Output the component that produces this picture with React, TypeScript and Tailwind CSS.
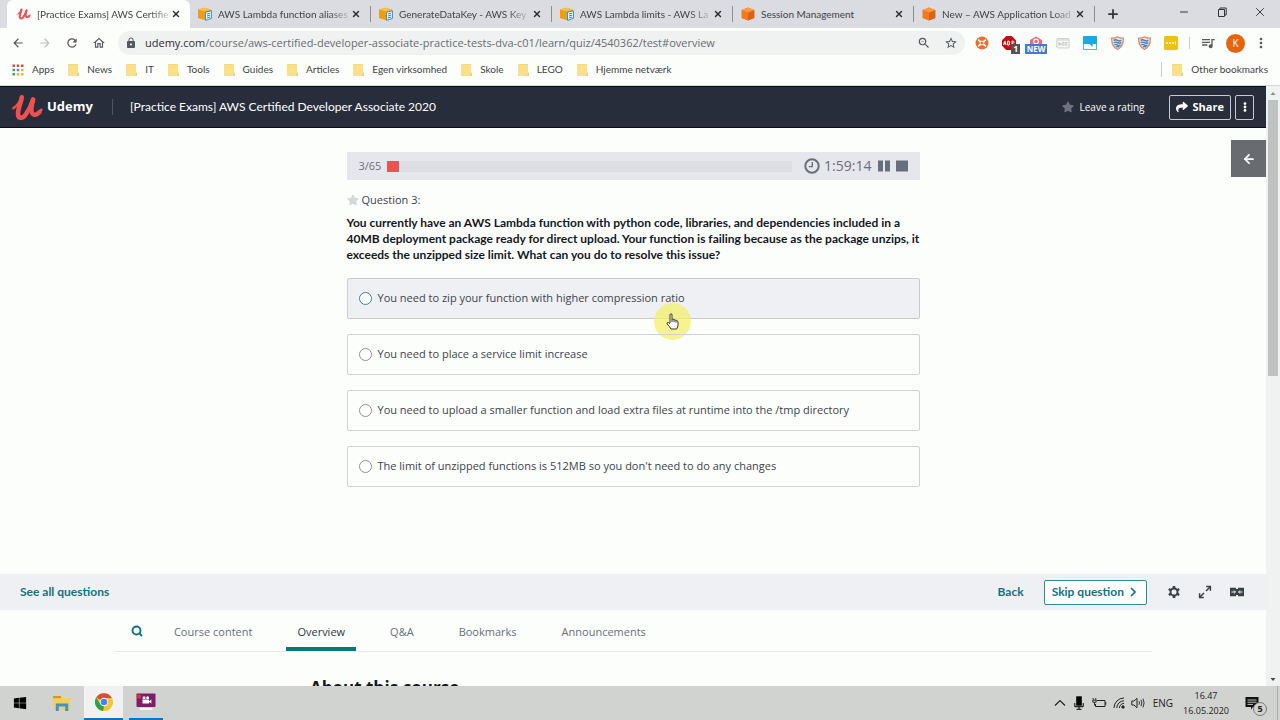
import React from "react";
import { ArrowLeft, Minus, Plus, X, Search } from "lucide-react";
import {
  MdArrowBack,
  MdArrowForward,
  MdRefresh,
  MdOutlineHome,
  MdLock,
  MdStarBorder,
  MdQueueMusic,
  MdMoreVert,
  MdOutlineZoomOut,
} from "react-icons/md";
import { FaStar, FaShare, FaEllipsisV, FaWindows } from "react-icons/fa";

const UdemyMark = ({ className }: { className: string }) => (
  <svg viewBox="0 0 31 27" className={className} fill="none" stroke="#ec5252" strokeLinecap="round" strokeLinejoin="round" aria-hidden="true">
    <path d="M1.4 14.2C4.6 12 7.6 8.4 9 4" strokeWidth="2.4" />
    <path d="M9.8 3.4C9 9 5.6 15 6 20.2C6.4 25 10.8 24.8 13.4 21C16.6 16.6 19.4 11 21 5.6" strokeWidth="4.6" />
    <path d="M21.2 5.6C19.8 11 18.2 16.5 20.4 19.5C22.2 22 25.2 20.6 27.6 18" strokeWidth="4.4" />
    <path d="M26 19L29.4 15.8" strokeWidth="2.6" />
  </svg>
);

const AwsDoc = () => (
  <svg viewBox="0 0 14 14" className="size-3.5 shrink-0" aria-hidden="true">
    <path d="M0 2.6L6.6 0.8L13 2.6V11L6.6 13L0 11Z" fill="#f3a51d" />
    <path d="M0 2.6L6.6 4.2V13L0 11Z" fill="#eb9f16" />
    <path d="M0 2.6L6.6 0.8L13 2.6L6.6 4.2Z" fill="#f9bf4c" />
    <path d="M7.6 5.2L13.4 3.8V11.4L7.6 13.4Z" fill="#fff" stroke="#2d7db5" strokeWidth="0.9" />
    <path d="M9 7L12.2 6.2M9 9L12.2 8.1M9 11L12.2 10" stroke="#2d7db5" strokeWidth="1" />
  </svg>
);

const AwsCube = () => (
  <svg viewBox="0 0 14 14" className="size-3.5 shrink-0" aria-hidden="true">
    <path d="M7 0.5L13.3 3V11L7 13.5L0.7 11V3Z" fill="#f58220" />
    <path d="M0.7 3L7 5.4V13.5L0.7 11Z" fill="#f27a1a" />
    <path d="M13.3 3L7 5.4V13.5L13.3 11Z" fill="#e0601a" />
    <path d="M7 0.5L13.3 3L7 5.4L0.7 3Z" fill="#fa9a3c" />
  </svg>
);

const Folder = () => (
  <svg viewBox="0 0 11 12" className="h-3 w-[11px] shrink-0" aria-hidden="true">
    <path d="M0.5 0H10V8.5L11 9V12H0.5Z" fill="#fbe08a" />
    <path d="M10 8.5L11 9V12H9Z" fill="#f0cd68" />
    <path d="M0.7 12V0.4H10" stroke="#f2d474" strokeWidth="0.7" fill="none" />
  </svg>
);

const Shield = () => (
  <svg viewBox="0 0 13 14" className="h-3.5 w-[13px]" aria-hidden="true">
    <path d="M6.5 0.7C8.3 1.8 10.3 2.2 12.3 2.1C12.6 7.5 10.8 11.3 6.5 13.5C2.2 11.3 0.4 7.5 0.7 2.1C2.7 2.2 4.7 1.8 6.5 0.7Z" fill="#dfe6ee" stroke="#e0875a" strokeWidth="1.2" />
    <path d="M2.6 4.4Q4.6 3.2 6.5 4.4T10.4 4.4M2.6 6.7Q4.6 5.5 6.5 6.7T10.4 6.7M3.4 9Q5 7.8 6.5 9T9.6 9M4.8 11Q6.5 10 8.2 11" stroke="#4e7fbc" strokeWidth="1.4" fill="none" />
  </svg>
);

const browserTabs = [
  { title: "[Practice Exams] AWS Certifie", icon: "udemy", active: true },
  { title: "AWS Lambda function aliases", icon: "doc", active: false },
  { title: "GenerateDataKey - AWS Key", icon: "doc", active: false },
  { title: "AWS Lambda limits - AWS La", icon: "doc", active: false },
  { title: "Session Management", icon: "cube", active: false },
  { title: "New – AWS Application Load", icon: "cube", active: false },
];

const TabStrip = () => (
  <div className="flex h-7 shrink-0 items-stretch bg-[#dadce1] pl-[7px]">
    <div className="flex min-w-0 flex-1">
      {browserTabs.map((t) => (
        <div
          key={t.title}
          className={
            t.active
              ? "flex w-[183px] min-w-0 items-center rounded-t-md bg-[#fcfefc] pr-2 pl-2.5"
              : "flex w-[181px] min-w-0 items-center pl-2"
          }
        >
          {t.icon === "udemy" && <UdemyMark className="h-3 w-3.5 shrink-0" />}
          {t.icon === "doc" && <AwsDoc />}
          {t.icon === "cube" && <AwsCube />}
          <span className="ml-1.5 min-w-0 flex-1 font-['Lato',sans-serif] text-[10px] whitespace-nowrap text-[#3f4246]">
            <span
              className={
                t.icon === "cube" && t.title.startsWith("Session")
                  ? ""
                  : "[mask-image:linear-gradient(to_right,black_85%,rgba(0,0,0,0.25))]"
              }
            >
              {t.title}
            </span>
          </span>
          <button aria-label="Close tab" className="ml-1 flex size-3 items-center justify-center text-[#2b2d30]">
            <X className="size-2.5" strokeWidth={3.4} />
          </button>
          {!t.active && <span className="ml-2 h-4 w-px bg-[#8b8e93]" />}
        </div>
      ))}
      <button aria-label="New tab" className="ml-2.5 flex w-4 items-center justify-center text-[#333]">
        <Plus className="size-3.5" strokeWidth={3} />
      </button>
    </div>
    <div className="flex items-center gap-[22px] pr-3 pb-1 text-[#333]">
      <button aria-label="Minimize" className="flex size-4 items-center justify-center"><Minus className="size-3" strokeWidth={2} /></button>
      <button aria-label="Restore" className="flex size-4 items-center justify-center">
        <svg viewBox="0 0 10 10" className="size-2.5" fill="none" stroke="currentColor"><path d="M1.5 2.5H7.5V9.5H1.5ZM3 2.5V1H9.2V8H7.5" /></svg>
      </button>
      <button aria-label="Close" className="flex size-4 items-center justify-center"><X className="size-3.5" strokeWidth={1.6} /></button>
    </div>
  </div>
);

const Extensions = () => (
  <div className="flex items-center gap-[13px]">
    <button aria-label="Extension" className="flex size-3.5 items-center justify-center">
      <svg viewBox="0 0 14 14" className="size-3.5">
        <circle cx="7" cy="7" r="6.5" fill="#e8702a" />
        <path d="M3.6 4.2L5.4 5.6M10.4 4.2L8.6 5.6M3.6 9.8L5.4 8.4M10.4 9.8L8.6 8.4" stroke="#fff" strokeWidth="1.6" strokeLinecap="round" />
        <circle cx="7" cy="7" r="1.9" fill="#e8702a" stroke="#fff" strokeWidth="0.9" />
      </svg>
    </button>
    <button aria-label="Ad blocker" className="relative flex size-3.5 items-center justify-center">
      <svg viewBox="0 0 14 14" className="size-3.5">
        <path d="M4.2 0H9.8L14 4.2V9.8L9.8 14H4.2L0 9.8V4.2Z" fill="#c1110f" />
        <path d="M1.4 9L2.8 5.2L4.2 9M2 7.8H3.7M5.6 9V5.2H7Q8.2 6 7 7Q8.6 8 7 9ZM10 9V5.2H11.4Q12.8 6.2 11.4 7.2H10" stroke="#fff" strokeWidth="1" fill="none" />
      </svg>
      <span className="absolute -right-1 -bottom-1 bg-[#555] px-0.5 text-[8px] leading-[10px] font-bold text-white">1</span>
    </button>
    <button aria-label="New extension" className="relative flex size-3.5 items-center justify-center">
      <svg viewBox="0 0 14 14" className="size-3.5"><path d="M1 4L7 0.5L13 4V10H1Z" fill="#ea6a78" /><circle cx="7" cy="5.5" r="2.4" fill="none" stroke="#fff" strokeWidth="1.2" /></svg>
      <span className="absolute -bottom-1 bg-[#4a78d0] px-0.5 text-[8px] leading-[10px] font-bold text-white">NEW</span>
    </button>
    <button aria-label="Cache extension" className="flex size-3.5 items-center justify-center">
      <svg viewBox="0 0 14 14" className="size-3.5"><rect x="0.8" y="2.5" width="12.4" height="9.5" rx="1" fill="#f6f6f6" stroke="#cfcfcf" /><path d="M1 4H13" stroke="#cfcfcf" /><path d="M3 6V9.5M3 7.8H5V9.5M8.5 6.5H6.8V9H8.5M11.5 6.5H9.8V9H11.5" stroke="#b4b4b4" strokeWidth="0.8" fill="none" /></svg>
    </button>
    <button aria-label="Window extension" className="flex size-3.5 items-center justify-center">
      <svg viewBox="0 0 14 14" className="size-3.5"><rect width="14" height="14" rx="0.8" fill="#1ba8e8" /><path d="M0.8 8H6.5L9 10.6H9.6V8H13.2V13.2H0.8Z" fill="#f2fafe" /></svg>
    </button>
    <button aria-label="Shield extension" className="flex size-3.5 items-center justify-center"><Shield /></button>
    <button aria-label="Second shield extension" className="flex size-3.5 items-center justify-center"><Shield /></button>
    <button aria-label="Password manager" className="flex size-3.5 items-center justify-center">
      <svg viewBox="0 0 14 14" className="size-3.5"><rect width="14" height="14" rx="1.5" fill="#eec211" /><circle cx="3" cy="7" r="1" fill="#fff" /><circle cx="6" cy="7" r="1" fill="#fff" /><circle cx="9" cy="7" r="1" fill="#fff" /><path d="M11.4 5.4V8.6" stroke="#fff" strokeWidth="0.8" /></svg>
    </button>
  </div>
);

const Toolbar = () => (
  <div className="flex h-[30px] shrink-0 items-center pr-[11px] pl-[11px] text-[#55585c]">
    <div className="flex items-center gap-[13px]">
      <button aria-label="Back"><MdArrowBack className="size-3.5" /></button>
      <button aria-label="Forward" className="text-[#bcbec0]"><MdArrowForward className="size-3.5" /></button>
      <button aria-label="Reload"><MdRefresh className="size-3.5" /></button>
      <button aria-label="Home"><MdOutlineHome className="size-3.5" /></button>
    </div>
    <div className="ml-3 flex h-6 min-w-0 flex-1 items-center gap-[13px] rounded-full bg-[#f0f2f1] pr-[7px] pl-[7px]">
      <div className="flex min-w-0 flex-1 items-center gap-2">
        <MdLock className="size-3 shrink-0" />
        <div className="min-w-0 flex-1 truncate text-[11px] text-[#686c70]">
          <span className="text-[#2b2e33]">udemy.com</span>/course/aws-certified-developer-associate-practice-tests-dva-c01/learn/quiz/4540362/test#overview
        </div>
      </div>
      <button aria-label="Zoom out"><MdOutlineZoomOut className="size-3.5" /></button>
      <button aria-label="Bookmark this page"><MdStarBorder className="size-3.5" /></button>
    </div>
    <div className="ml-2.5"><Extensions /></div>
    <div className="mr-2.5 ml-[11px] h-3 w-px bg-[#c9cbcd]" />
    <button aria-label="Media"><MdQueueMusic className="size-4" /></button>
    <button aria-label="Profile" className="ml-2.5 flex size-[19px] items-center justify-center rounded-full bg-[#e8640c] text-[10px] text-white">K</button>
    <button aria-label="Browser menu" className="ml-2"><MdMoreVert className="size-4" /></button>
  </div>
);

const bookmarks = ["News", "IT", "Tools", "Guides", "Articles", "Egen virksomhed", "Skole", "LEGO", "Hjemme netværk"];

const BookmarkBar = () => (
  <div className="flex h-7 shrink-0 items-center border-b border-[#d5d8da] pr-3 pb-1 pl-3 font-['Lato',sans-serif] text-[10px] text-[#3f4246]">
    <a href="#apps" className="mr-3.5 flex items-center gap-2">
      <svg viewBox="0 0 12 12" className="size-3">
        <path d="M0.5 0.5H3V3H0.5ZM4.8 0.5H7.2V3H4.8ZM9 0.5H11.5V3H9Z" fill="#dd4b3e" />
        <path d="M0.5 4.8H3V7.2H0.5Z" fill="#3aa757" /><path d="M4.8 4.8H7.2V7.2H4.8Z" fill="#4285f4" /><path d="M9 4.8H11.5V7.2H9Z" fill="#f2b02b" />
        <path d="M0.5 9H3V11.5H0.5Z" fill="#3aa757" /><path d="M4.8 9H7.2V11.5H4.8ZM9 9H11.5V11.5H9Z" fill="#f2b02b" />
      </svg>
      Apps
    </a>
    {bookmarks.map((b) => (
      <a key={b} href={"#" + b} className="mr-3.5 flex items-center gap-2 whitespace-nowrap"><Folder />{b}</a>
    ))}
    <div className="ml-auto flex items-center gap-2 border-l border-[#c9cbcd] pl-2.5 whitespace-nowrap">
      <Folder /><a href="#other">Other bookmarks</a>
    </div>
  </div>
);

const CourseHeader = () => (
  <header className="flex h-[42px] shrink-0 items-center border-y border-[#0b0d1c] bg-[#282d3b] pr-3 pl-3 text-white">
    <a href="#home" className="flex items-center gap-1">
      <UdemyMark className="h-[27px] w-[31px]" />
      <span className="text-[13px] font-bold">Udemy</span>
    </a>
    <div className="mr-[17px] ml-[19px] h-4 w-px bg-[#50545f]" />
    <h1 className="font-['Lato',sans-serif] text-xs">[Practice Exams] AWS Certified Developer Associate 2020</h1>
    <button className="mr-6 ml-auto flex items-center gap-1.5 text-[10px]"><FaStar className="size-3 text-[#6e727e]" />Leave a rating</button>
    <button className="mr-1 flex h-[25px] items-center gap-[5px] rounded-xs border border-[#c8cad0] px-1.5 text-[11px] font-bold"><FaShare className="size-3" />Share</button>
    <button aria-label="More options" className="flex h-[25px] w-[19px] items-center justify-center rounded-xs border border-[#c8cad0]"><FaEllipsisV className="size-2.5" /></button>
  </header>
);

const options = [
  "You need to zip your function with higher compression ratio",
  "You need to place a service limit increase",
  "You need to upload a smaller function and load extra files at runtime into the /tmp directory",
  "The limit of unzipped functions is 512MB so you don't need to do any changes",
];

const Pointer = () => (
  <div className="pointer-events-none absolute top-6 left-[306px] flex size-[37px] items-center justify-center rounded-full bg-[#f3f06a]/75">
    <svg viewBox="0 0 13 17" className="h-[17px] w-[13px]" fill="#fff" stroke="#222" strokeWidth="0.9" strokeLinejoin="round">
      <path d="M4 10V2Q4 0.8 5 0.8T6 2V6.5Q6.2 5.9 7 6T8 7Q8.3 6.5 9 6.7T10 7.8Q10.3 7.3 11 7.6T12 9V12Q12 14 10.6 16H5Q3.6 13.5 1.2 11Q0.6 9.8 1.6 9.4T4 10.8" />
      <path d="M6 6.5V9M8 7V9.2M10 7.8V9.6" fill="none" />
    </svg>
  </div>
);

const Quiz = () => (
  <section className="relative h-[446px] shrink-0 px-4 pt-6">
    <div className="mx-auto max-w-[573px]">
      <div className="flex h-7 items-center bg-[#e6e7ec] pr-3 pl-3 text-[#686f7a]">
        <span className="w-7 text-[11px] whitespace-nowrap">3/65</span>
        <div className="flex h-[11px] flex-1 bg-[#dcdde2]"><div className="w-3 bg-[#ec5252]" /></div>
        <svg viewBox="0 0 16 16" className="ml-3 size-4" fill="none" stroke="currentColor" strokeWidth="2"><circle cx="8" cy="8" r="6.7" /><path d="M8.3 4V8.6H4.8" strokeWidth="1.4" /></svg>
        <span className="ml-1 text-sm">1:59:14</span>
        <button aria-label="Pause" className="ml-1.5"><svg viewBox="0 0 12 12" className="size-3" fill="currentColor"><path d="M0 0.5H5V11.5H0ZM7 0.5H12V11.5H7Z" /></svg></button>
        <button aria-label="Stop" className="ml-1.5"><svg viewBox="0 0 12 12" className="size-3" fill="currentColor"><path d="M0 0.5H12V11.5H0Z" /></svg></button>
      </div>
      <div className="mt-3 flex h-4 items-center gap-[3px] text-[11px] text-[#40434a]"><FaStar className="size-3 text-[#d6d7d9]" />Question 3:</div>
      <p className="mt-[7px] font-['Lato',sans-serif] text-xs leading-4 font-bold text-[#14171c]">
        You currently have an AWS Lambda function with python code, libraries, and dependencies included in a 40MB deployment package ready for direct upload. Your function is failing because as the package unzips, it exceeds the unzipped size limit. What can you do to resolve this issue?
      </p>
      <div className="mt-[15px] flex flex-col gap-[15px]">
        {options.map((o, i) => (
          <label
            key={o}
            className={
              i === 0
                ? "relative flex h-[41px] items-center gap-1.5 rounded-xs border border-[#cacbcf] bg-[#eff0f4] pl-[11px] text-[11px] text-[#40434a]"
                : "relative flex h-[41px] items-center gap-1.5 rounded-xs border border-[#cfd1d2] pl-[11px] text-[11px] text-[#40434a]"
            }
          >
            <input
              type="radio"
              name="answer"
              className={
                i === 0
                  ? "size-[13px] shrink-0 appearance-none rounded-full border border-[#2f8b91] bg-white"
                  : "size-[13px] shrink-0 appearance-none rounded-full border border-[#8f9295] bg-white"
              }
            />
            {o}
            {i === 0 && <Pointer />}
          </label>
        ))}
      </div>
    </div>
    <button aria-label="Open sidebar" className="absolute top-3 right-0 flex h-[37px] w-[35px] items-center justify-center bg-[#686c71] text-white"><ArrowLeft className="size-3.5" strokeWidth={3} /></button>
  </section>
);

const QuizFooter = () => (
  <div className="flex h-9 shrink-0 items-center bg-[#eff0f4] pr-[21px] pl-5 font-['Lato',sans-serif] text-xs font-bold text-[#0f7480]">
    <button>See all questions</button>
    <button className="mr-5 ml-auto">Back</button>
    <button className="mr-5 flex h-[25px] items-center gap-1.5 rounded-xs border border-[#2f8b91] bg-white pr-2.5 pl-[7px]">
      Skip question
      <svg viewBox="0 0 6 10" className="h-2.5 w-1.5" fill="none" stroke="currentColor" strokeWidth="1.6"><path d="M1 1L5 5L1 9" /></svg>
    </button>
    <div className="flex items-center gap-[17px] text-[#3a3f47]">
      <button aria-label="Settings">
        <svg viewBox="0 0 14 14" className="size-3.5" fill="none" stroke="currentColor"><circle cx="7" cy="7" r="3.5" strokeWidth="1.9" /><path d="M7 1V3M7 11V13M1.8 4L3.5 5M10.5 9L12.2 10M1.8 10L3.5 9M10.5 5L12.2 4" strokeWidth="2.6" /></svg>
      </button>
      <button aria-label="Fullscreen">
        <svg viewBox="0 0 14 14" className="size-3.5" fill="none" stroke="currentColor" strokeWidth="1.5"><path d="M8 6L12 2M6 8L2 12" /><path d="M8.2 1.6H12.4V5.8M5.8 12.4H1.6V8.2" /></svg>
      </button>
      <button aria-label="Collapse player">
        <svg viewBox="0 0 16 12" className="h-3 w-4"><path d="M1 1.8H7V3H9V1.8H15V10.2H9V9H7V10.2H1Z" fill="currentColor" /><path d="M2.4 6H6.4M4.9 4.4L6.5 6L4.9 7.6M13.6 6H9.6M11.1 4.4L9.5 6L11.1 7.6" stroke="#eff0f4" strokeWidth="1" fill="none" /></svg>
      </button>
    </div>
  </div>
);

const CourseTabs = () => (
  <nav className="mx-auto flex h-[42px] w-[82%] shrink-0 items-stretch border-b border-[#e8e9eb] pl-[15px] text-[11px] text-[#686f7a]">
    <button aria-label="Search course" className="mr-[18px] flex items-center px-0.5 text-[#0f7480]"><Search className="size-3" strokeWidth={3.8} /></button>
    <div className="flex items-stretch gap-[23px]">
      {["Course content", "Overview", "Q&A", "Bookmarks", "Announcements"].map((t) => (
        <a
          key={t}
          href={"#" + t}
          className={
            t === "Overview"
              ? "flex items-center border-b-4 border-[#0f7480] px-[11px] pt-2 text-[#33373d]"
              : "flex items-center border-b-4 border-transparent px-[11px] pt-2"
          }
        >
          {t}
        </a>
      ))}
    </div>
  </nav>
);

const Taskbar = () => (
  <footer className="flex h-[34px] shrink-0 items-stretch bg-[#d1d3d1] text-[#222]">
    <button aria-label="Start" className="flex w-10 items-center justify-center text-black"><FaWindows className="size-3.5" /></button>
    <button aria-label="File Explorer" className="flex w-11 items-center justify-center">
      <svg viewBox="0 0 18 17" className="h-[17px] w-[18px]"><path d="M0 1H8L9 3H17V15H0Z" fill="#f5cf5b" /><path d="M0 1H8V3.2H0Z" fill="#d49a1c" /><path d="M2.8 8.5H15.2V16H12.2V11.5H5.8V16H2.8Z" fill="#3f93cc" /></svg>
    </button>
    <button aria-label="Chrome" className="flex w-[39px] items-center justify-center border-b-2 border-[#1272bd] bg-[#f0f1f0]">
      <svg viewBox="0 0 18 18" className="size-[18px]"><circle cx="9" cy="9" r="9" fill="#fbc52d" /><path d="M9 9L1.2 4.5A9 9 0 0 1 16.8 4.9H9Z" fill="#dd4b3e" /><path d="M1.2 4.5L5.4 11.2L9 13L8.2 18A9 9 0 0 1 1.2 4.5Z" fill="#2fa04f" /><path d="M9 4.9H16.8A9 9 0 0 1 8.2 18L12.5 11Z" fill="#fbc52d" /><circle cx="9" cy="9" r="4.2" fill="#fff" /><circle cx="9" cy="9" r="3.3" fill="#4285f4" /></svg>
    </button>
    <button aria-label="Screen recorder" className="ml-1.5 flex w-[34px] items-center justify-center border-b-2 border-[#1272bd]">
      <svg viewBox="0 0 20 18" className="h-[18px] w-5"><rect x="0.5" y="0.5" width="19" height="13.5" rx="0.8" fill="#7c1f66" /><circle cx="3" cy="3.6" r="2.2" fill="#e03238" /><rect x="6.5" y="6.5" width="6.5" height="4" fill="#fff" /><path d="M13 8.3L15.4 6.5V10.5L13 9Z" fill="#fff" /><circle cx="8" cy="4.8" r="1.5" fill="#fff" /><circle cx="11.6" cy="4.8" r="1.5" fill="#fff" /><path d="M4.5 16H15.5" stroke="#f5f5f5" strokeWidth="2" strokeLinecap="round" /></svg>
    </button>
    <div className="ml-auto flex items-center gap-1.5 text-[10px]">
      <button aria-label="Show hidden icons"><svg viewBox="0 0 12 12" className="size-3" fill="none" stroke="currentColor" strokeWidth="1.2"><path d="M1 8.5L6 3.5L11 8.5" /></svg></button>
      <svg viewBox="0 0 14 14" className="size-3.5 text-black"><rect x="4.2" y="0.3" width="5.6" height="9.4" fill="currentColor" /><path d="M2.8 7V10.7H11.2V7M7 10.5V13M4.6 13.3H9.4" stroke="currentColor" fill="none" /></svg>
      <svg viewBox="0 0 15 12" className="h-3 w-[15px]" fill="none" stroke="currentColor"><path d="M5 3.5H13V9.5H3.5V7M13.8 5.2V7.8" /><path d="M1.2 1V3.2M3.8 1V3.2M0.8 3.2H4.2V5.2H0.8ZM2.5 5V8.5" strokeWidth="0.9" /></svg>
      <svg viewBox="0 0 12 12" className="size-3" fill="none" stroke="currentColor" strokeWidth="1"><path d="M1 11A10 10 0 0 1 11 1M3.8 11A7.2 7.2 0 0 1 11 3.8M6.4 11A4.6 4.6 0 0 1 11 6.4" /><circle cx="10" cy="10" r="1.2" fill="currentColor" /></svg>
      <svg viewBox="0 0 14 12" className="h-3 w-3.5" fill="none" stroke="currentColor"><path d="M0.8 4H3L6 1.3V10.7L3 8H0.8Z" /><path d="M8 4.2Q9 6 8 7.8M10 2.8Q11.6 6 10 9.2M12 1.6Q14.2 6 12 10.4" strokeWidth="0.9" /></svg>
      <span className="ml-0.5">ENG</span>
      <div className="ml-1 text-center text-[9px] leading-[15px]"><div>16.47</div><div>16.05.2020</div></div>
      <button aria-label="Notifications" className="relative mr-[18px] ml-2.5 flex">
        <svg viewBox="0 0 14 14" className="size-3.5"><path d="M0.5 1H13.5V11H8L6 13.5V11H0.5Z" fill="#111" /><path d="M2.5 4H11.5M2.5 6.2H11.5M2.5 8.4H8" stroke="#d1d3d1" strokeWidth="0.9" /></svg>
        <span className="absolute -right-2 -bottom-1.5 flex size-3.5 items-center justify-center rounded-full border border-[#777] bg-[#d1d3d1] text-[9px] font-bold">5</span>
      </button>
    </div>
    <div className="mr-0.5 w-px bg-[#a9abaa]" />
  </footer>
);

export default function App() {
  return (
    <div className="flex h-screen flex-col overflow-hidden bg-[#fcfefc] font-['Open_Sans','Noto_Sans',sans-serif]">
      <TabStrip />
      <Toolbar />
      <BookmarkBar />
      <div className="flex min-h-0 flex-1">
        <main className="flex min-w-0 flex-1 flex-col overflow-hidden">
          <CourseHeader />
          <Quiz />
          <QuizFooter />
          <CourseTabs />
          <div className="mx-auto w-full max-w-[646px] pt-6">
            <h2 className="text-[17px] leading-6 font-bold text-[#14171c]">About this course</h2>
          </div>
        </main>
        <div className="flex w-3.5 shrink-0 flex-col items-center bg-[#f0f1f1]" aria-hidden="true">
          <svg viewBox="0 0 8 14" className="h-3.5 w-2"><path d="M1.5 9L4 6L6.5 9Z" fill="#8b8d8f" /></svg>
          <div className="h-[276px] w-2.5 bg-[#c0c2c1]" />
          <svg viewBox="0 0 8 14" className="mt-auto h-3.5 w-2"><path d="M1.5 6L4 9L6.5 6Z" fill="#444" /></svg>
        </div>
      </div>
      <Taskbar />
    </div>
  );
}
